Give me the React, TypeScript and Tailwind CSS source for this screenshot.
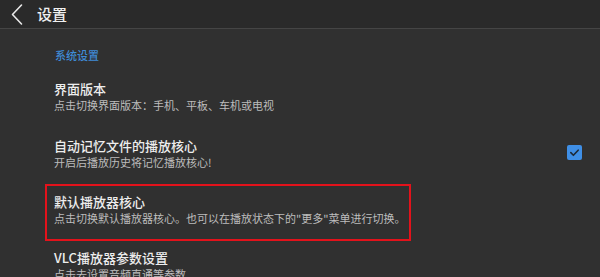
import React from "react";

const font = { fontFamily: '"Noto Sans CJK SC", "Noto Sans", sans-serif' };

type Item = { title: string; desc: string; checked?: boolean; highlight?: boolean; h: string };

const items: Item[] = [
    { title: "界面版本", desc: "点击切换界面版本：手机、平板、车机或电视", h: "h-[57px]" },
    { title: "自动记忆文件的播放核心", desc: "开启后播放历史将记忆播放核心!", checked: true, h: "h-[56px]" },
    { title: "默认播放器核心", desc: "点击切换默认播放器核心。也可以在播放状态下的\"更多\"菜单进行切换。", highlight: true, h: "h-[56px]" },
    { title: "VLC播放器参数设置", desc: "点击去设置音频直通等参数", h: "h-[56px]" },
];

const SettingRow = ({ item }: { item: Item }) => {
    return <div className={`relative flex flex-row items-start ${item.h}`}>
        <div className="flex flex-col pl-[54px] pt-[8px] flex-1">
            <div className="text-[13px] leading-[16px] font-medium text-[#ededed]">{item.title}</div>
            <div className="text-[11px] leading-[16px] text-[#bdbdbd] whitespace-nowrap">{item.desc}</div>
        </div>
        {item.checked ?
            <div className="mt-[15px] mr-[18px] w-[15px] h-[15px] rounded-[2px] bg-[#3f8fe6] flex items-center justify-center">
                <svg width="11" height="11" viewBox="0 0 12 12" fill="none">
                    <path d="M2 6.2 L4.8 9 L10 3.5" stroke="#1e2a38" strokeWidth="1.8" strokeLinecap="round" strokeLinejoin="round" />
                </svg>
            </div>
            : ""
        }
        {item.highlight ?
            <div className="absolute left-[45px] top-[-2px] w-[366px] h-[57px] border-2 border-[#e3121b]"></div>
            : ""
        }
    </div>
}

export default function App() {
    return <div className="w-[600px] h-[277px] overflow-hidden bg-[#303030]" style={font}>
        <div className="flex flex-row items-center h-[29px] bg-[#2a2a2a] border-b border-[#454545]">
            <svg className="ml-[10px]" width="14" height="24" viewBox="0 0 14 24" fill="none">
                <path d="M11.5 3 L2.5 12.5 L11.5 22" stroke="#e8e8e8" strokeWidth="1.6" strokeLinecap="round" strokeLinejoin="round" />
            </svg>
            <span className="ml-[13px] text-[15px] leading-[16px] font-medium text-[#f0f0f0]">设置</span>
        </div>
        <div className="h-[44px] pt-[18px] pl-[55px] text-[11px] leading-[16px] font-medium text-[#3f8bd6]">系统设置</div>
        {items.map((item, i) => <SettingRow key={i} item={item} />)}
    </div>
}
